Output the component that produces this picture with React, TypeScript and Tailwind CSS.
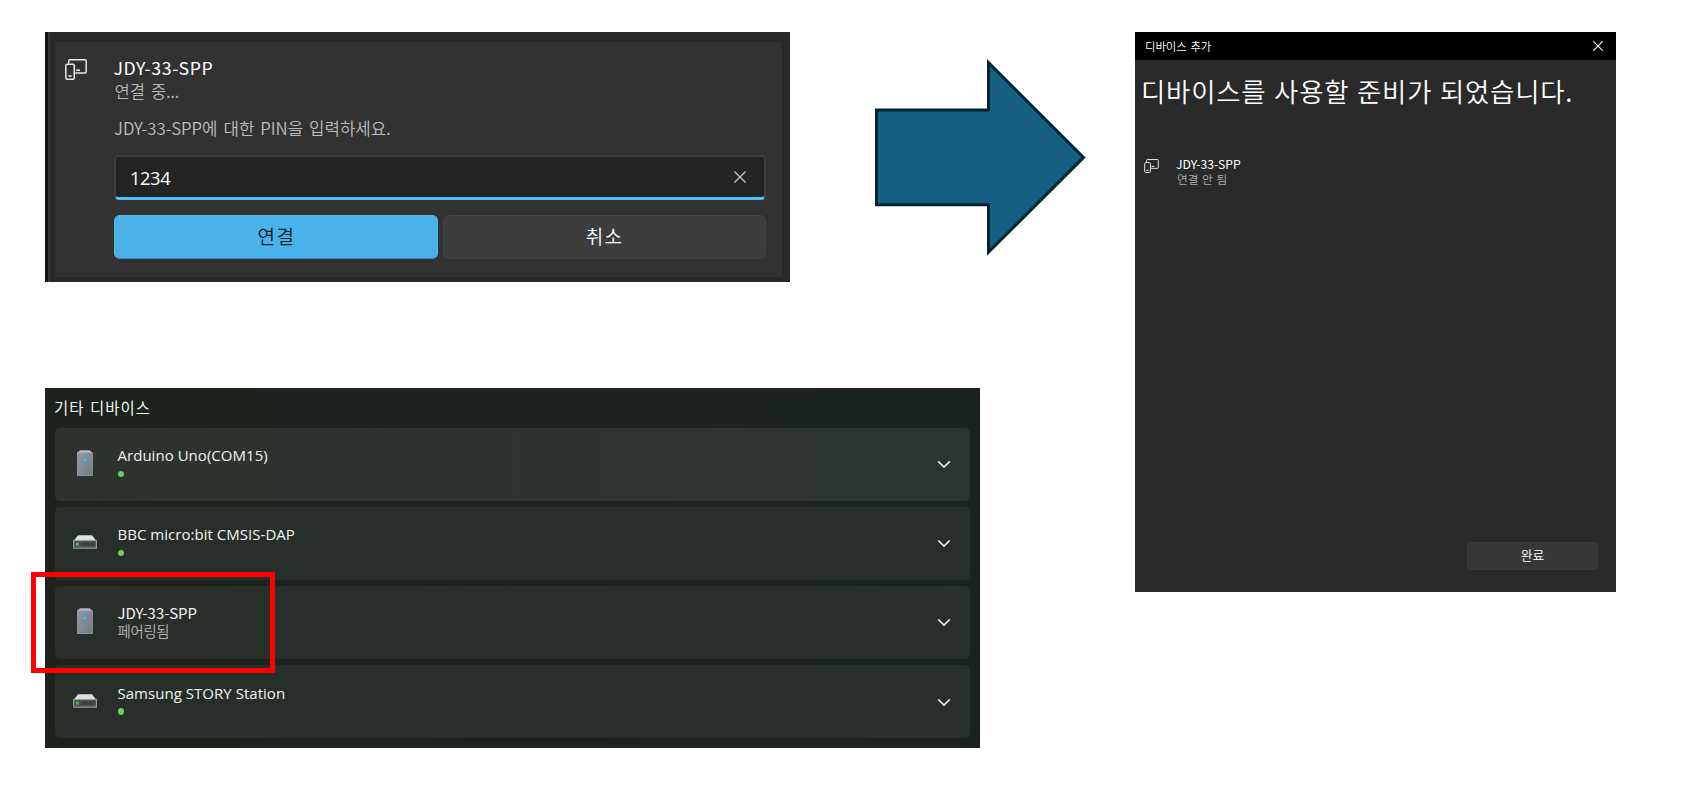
import type { ReactNode } from "react";

function DeviceIcon({ className }: { className: string }) {
  return (
    <svg viewBox="0 0 22 21" className={className} fill="none" stroke="currentColor" strokeWidth="1.5">
      <path d="M3.7 4.6V2.1Q3.7.8 5 .8H19.9Q21.2.8 21.2 2.1V12.7Q21.2 14 19.9 14H10.4" />
      <rect x=".8" y="5.3" width="8.5" height="14.9" rx="1.5" />
      <path d="M11 11.2H15M3.4 17H6.7" />
    </svg>
  );
}

function CloseIcon({ className }: { className: string }) {
  return (
    <svg viewBox="0 0 12 12" className={className} fill="none" stroke="currentColor" strokeWidth="1.3">
      <path d="M.4.4 11.6 11.6M11.6.4.4 11.6" />
    </svg>
  );
}

function TowerIcon() {
  return (
    <svg viewBox="0 0 16 26" className="h-[26px] w-4">
      <defs>
        <linearGradient id="tower" x1="0" y1="0" x2="1" y2="1">
          <stop offset="0" stopColor="#9299a3" />
          <stop offset="1" stopColor="#737b84" />
        </linearGradient>
      </defs>
      <path d="M3 .3H12.6L15.3 2.4V3.5H.4V2.4Z" fill="#b3b7c0" />
      <rect x=".4" y="2.8" width="15" height="22.8" fill="url(#tower)" stroke="#a3a9b0" strokeWidth=".7" />
      <circle cx="7.8" cy="10" r="2.4" fill="#3f93a8" opacity=".55" />
      <circle cx="7.8" cy="10" r="1.4" fill="#2fd3ea" />
    </svg>
  );
}

function DriveIcon() {
  return (
    <svg viewBox="0 0 24 14" className="h-3.5 w-6">
      <path d="M5 .3H19L23.2 5.8H.8Z" fill="#dfe0e2" />
      <rect x=".6" y="5.4" width="22.8" height="7.8" fill="#515253" stroke="#a2a3a4" strokeWidth="1" />
      <path d="M8 8.1H22M8 10H22" stroke="#303132" strokeWidth=".9" />
      <rect x="3" y="7.8" width="2.6" height="2.8" fill="#2fd035" />
    </svg>
  );
}

function PairPanel() {
  return (
    <section className="flex h-[250px] w-[745px] border-l-3 border-[#111111] bg-[#292929] pt-2.5 pr-2">
      <div className="-mt-2.5 h-[250px] w-0.5 bg-[#353535]" />
      <div className="ml-[5px] h-[235px] w-[727px] bg-[#323232] pr-4 pl-[59px] text-white">
        <div className="-ml-12 flex gap-[26.5px] pt-3.5">
          <DeviceIcon className="mt-[3px] ml-[-1px] h-[21px] w-[22px] text-[#e8e8e8]" />
          <div className="leading-[23px] whitespace-nowrap">
            <h2 className="text-[17.7px] tracking-[0.6px]">JDY-33-SPP</h2>
            <p className="pt-px pl-px text-[16.6px] leading-[22px] font-[350] tracking-[-0.1px] text-[#b8b8b8] [word-spacing:2.5px]">
              연결 중...
            </p>
          </div>
        </div>
        <p className="mt-[15px] text-[16.8px] leading-[23px] font-[350] whitespace-nowrap text-[#bdbdbd] [word-spacing:2.2px]">
          JDY-33-SPP에 대한 PIN을 입력하세요.
        </p>
        <div className="mt-[15px] flex h-[45px] items-center justify-between overflow-hidden rounded-[5px] border-2 border-b-3 border-[#3e3e3e] border-b-[#4cc2ff] bg-[#242424] pr-[18px] pl-3.5">
          <span className="pt-px font-['Open_Sans'] text-[18.3px] leading-6 tracking-[-0.4px]">1234</span>
          <CloseIcon className="size-3 text-[#c4c4c4]" />
        </div>
        <div className="mt-[15px] flex gap-[5px] text-[19px] font-[350]">
          <button className="h-11 flex-1 rounded-md border border-[#56b8ed] border-b-[#3c8fbc] bg-[#4ab2e9] pb-0.5 pl-px tracking-[1.5px] text-[#0a1a24]">
            연결
          </button>
          <button className="h-11 flex-1 rounded-md border border-[#444444] bg-[#3d3d3d] pb-0.5 tracking-[1.2px]">취소</button>
        </div>
      </div>
    </section>
  );
}

function Arrow() {
  return (
    <svg viewBox="0 0 212 198" className="h-[198px] w-[212px]">
      <path
        d="M2.5 51H114.5V3.6L209.5 98.4L114.5 193.2V145.8H2.5Z"
        fill="#156082"
        stroke="#042433"
        strokeWidth="3"
        strokeMiterlimit="10"
      />
    </svg>
  );
}

function DeviceRow({ icon, name, status, first }: { icon: ReactNode; name: string; status?: string; first?: boolean }) {
  return (
    <li
      className={
        "flex h-[73px] rounded-[5px] pr-[19px] " +
        (first ? "bg-linear-to-r from-[#2e322d] to-[#2c3432]" : "bg-linear-to-r from-[#282e29] to-[#272e2b]")
      }
    >
      <div className="flex w-[61px] justify-center pt-[22.5px] pr-[1.5px]">{icon}</div>
      <div className="ml-[1.5px] flex-1 whitespace-nowrap">
        {status ? (
          <>
            <h3 className="pt-[18.5px] text-[15px] leading-[18px] text-[#f2f2f2]">{name}</h3>
            <p className="text-[14.4px] leading-[18px] font-[350] tracking-[-0.3px] text-[#b4b7b5]">{status}</p>
          </>
        ) : (
          <>
            <h3 className="pt-[18.5px] font-['Open_Sans'] text-[15px] leading-[19px] tracking-[0.03px] text-[#f2f2f2]">{name}</h3>
            <div className="mt-[5.5px] size-[6.6px] rounded-full bg-[#6ccb5f]" />
          </>
        )}
      </div>
      <svg viewBox="0 0 14 9" className="mt-[32.5px] h-[9px] w-3.5" fill="none" stroke="#ececec" strokeWidth="1.5">
        <path d="M1.2 1.4 7 7.1 12.8 1.4" />
      </svg>
    </li>
  );
}

function DeviceList() {
  return (
    <section className="relative h-[360px] w-[935px] bg-linear-to-r from-[#1d221c] to-[#1b2321] px-2.5 pt-[9px]">
      <h2 className="-ml-px text-[15.5px] leading-5 tracking-[1px] whitespace-nowrap text-[#f2f2f2] [word-spacing:1px]">
        기타 디바이스
      </h2>
      <ul className="mt-[10.6px] flex flex-col gap-[6.15px]">
        <DeviceRow icon={<TowerIcon />} name="Arduino Uno(COM15)" first />
        <DeviceRow icon={<div className="pt-1.5"><DriveIcon /></div>} name="BBC micro:bit CMSIS-DAP" />
        <DeviceRow icon={<TowerIcon />} name="JDY-33-SPP" status="페어링됨" />
        <DeviceRow icon={<div className="pt-1.5"><DriveIcon /></div>} name="Samsung STORY Station" />
      </ul>
      <div className="absolute top-[184px] left-[-14px] h-[101px] w-[244px] border-5 border-[#ff0000]" />
    </section>
  );
}

function ReadyDialog() {
  return (
    <section className="flex h-[560px] w-[481px] flex-col bg-[#2a2a2a] text-white">
      <header className="flex h-7 items-center justify-between bg-black pr-[13px] pl-2.5">
        <span className="pt-px text-[11.4px] font-[350] tracking-[-0.1px] [word-spacing:1.5px]">디바이스 추가</span>
        <CloseIcon className="size-2.5" />
      </header>
      <h1 className="mt-[13px] pl-1.5 text-[26.4px] leading-9 font-[350] tracking-[0.8px] whitespace-nowrap [word-spacing:1px]">
        디바이스를 사용할 준비가 되었습니다.
      </h1>
      <div className="mt-12 flex gap-[17px] pl-[9px]">
        <DeviceIcon className="mt-0.5 h-3.5 w-[15px] text-[#e6e6e6]" />
        <div className="whitespace-nowrap">
          <h2 className="text-[12.2px] leading-[15px]">JDY-33-SPP</h2>
          <p className="pl-px text-[11.7px] leading-[13px] font-[350] text-[#b0b0b0] [word-spacing:1px]">연결 안 됨</p>
        </div>
      </div>
      <button className="mt-auto mr-[18px] mb-[22px] h-7 w-[131px] self-end rounded-[4px] border border-[#3c3c3c] bg-[#373737] pb-0.5 text-[12.8px] leading-6 font-[350]">
        완료
      </button>
    </section>
  );
}

export default function App() {
  return (
    <main className="flex h-[789px] w-[1697px] overflow-hidden bg-white pt-8 pl-[45px] font-['Noto_Sans_CJK_KR',sans-serif]">
      <div className="w-[1090px]">
        <div className="flex gap-[84px]">
          <PairPanel />
          <div className="pt-[27px]">
            <Arrow />
          </div>
        </div>
        <div className="mt-[106px]">
          <DeviceList />
        </div>
      </div>
      <ReadyDialog />
    </main>
  );
}
